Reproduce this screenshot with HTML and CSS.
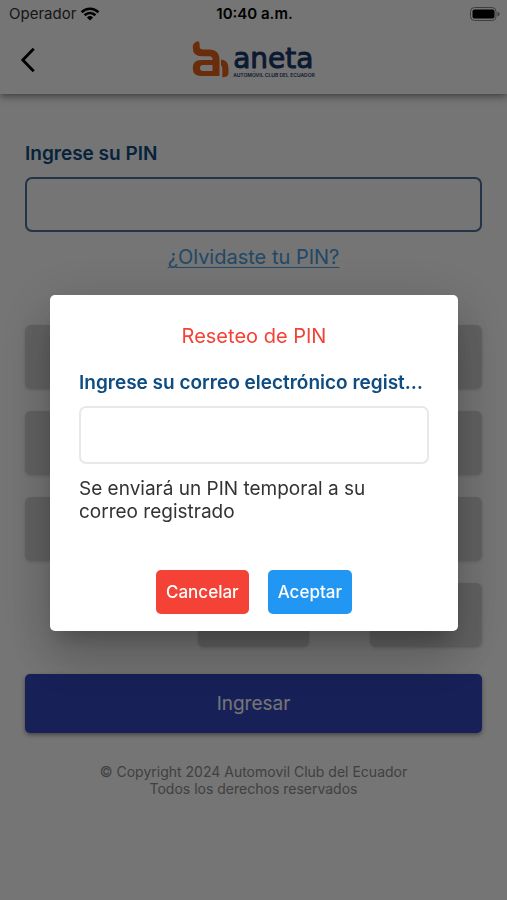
FILE: index.html
```html
<!DOCTYPE html>
<html lang="es">
<head>
  <meta charset="utf-8">
  <meta name="viewport" content="width=device-width, initial-scale=1">
  <title>Aneta</title>
  <link rel="stylesheet" href="styles.css">
</head>
<body>
  <header class="topbar">
    <div class="status">
      <span class="carrier">Operador
        <svg class="wifi" viewBox="0 0 20 14" aria-hidden="true">
          <path d="M1.6 5.2a12 12 0 0 1 16.8 0M4.6 8.2a7.8 7.8 0 0 1 10.8 0"/>
          <path class="dot" d="M10 13.6 6.9 10.5a4.5 4.5 0 0 1 6.2 0z"/>
        </svg>
      </span>
      <span class="clock">10:40 a.m.</span>
      <svg class="battery" viewBox="0 0 30 14" aria-hidden="true">
        <rect class="shell" x="0.5" y="0.5" width="25.5" height="13" rx="4"/>
        <rect x="2.5" y="2.5" width="22" height="9" rx="2"/>
        <path class="cap" d="M27.5 4.5q2.2 1 2.2 2.5t-2.2 2.5z"/>
      </svg>
    </div>
    <nav class="nav">
      <button class="back" type="button" aria-label="Atrás">
        <svg viewBox="0 0 14 24" aria-hidden="true"><path d="M12.3 1.7 2.2 12l10.1 10.3"/></svg>
      </button>
      <div class="brand">
        <svg class="mark" viewBox="0 0 37 37" aria-hidden="true">
          <path d="M3 1.500Q7.600-1.500 7.600 3V5.500Q7.600 8.500 11 8.500H17Q27.500 8.500 27.500 19V35H9Q.8 35 .8 27.500V26.500Q.8 19 9 19H20.500V18Q20.500 15.300 17.500 15.300H10Q.8 15.300 .8 7V5Q.8 3 3 1.500ZM20.500 24H11Q8 24 8 27T11 30H20.500Z" fill-rule="evenodd"/>
          <path d="M29 18.500Q36.500 19 36.500 27V32Q36.500 36.300 30.300 36.300V27Q30.300 25 29 24.500Z"/>
        </svg>
        <div class="wordmark">
          <span class="name">aneta</span>
          <span class="tagline">AUTOMÓVIL CLUB DEL ECUADOR</span>
        </div>
      </div>
    </nav>
  </header>

  <main class="page">
    <label class="label" for="pin">Ingrese su PIN</label>
    <input class="field pin" id="pin" type="password">
    <a class="forgot" href="#reset">¿Olvidaste tu PIN?</a>
    <div class="keypad">
      <button type="button" aria-label="1"></button>
      <button type="button" aria-label="2"></button>
      <button type="button" aria-label="3"></button>
      <button type="button" aria-label="4"></button>
      <button type="button" aria-label="5"></button>
      <button type="button" aria-label="6"></button>
      <button type="button" aria-label="7"></button>
      <button type="button" aria-label="8"></button>
      <button type="button" aria-label="9"></button>
      <button class="zero" type="button" aria-label="0"></button>
      <button type="button" aria-label="Borrar"></button>
    </div>
    <button class="submit" type="button">Ingresar</button>
    <footer class="legal">© Copyright 2024 Automovil Club del Ecuador<br>Todos los derechos reservados</footer>
  </main>

  <div class="scrim">
    <form class="dialog" id="reset" role="dialog" aria-labelledby="reset-title">
      <h2 class="title" id="reset-title">Reseteo de PIN</h2>
      <label class="label" for="email">Ingrese su correo electrónico registrado</label>
      <input class="field" id="email" type="email">
      <p class="hint">Se enviará un PIN temporal a su correo registrado</p>
      <div class="actions">
        <button class="cancel" type="button">Cancelar</button>
        <button class="accept" type="button">Aceptar</button>
      </div>
    </form>
  </div>
</body>
</html>
```

FILE: styles.css
```css
* {
  box-sizing: border-box;
}

body {
  margin: 0;
  min-height: 100vh;
  background: #fefefe;
  color: #000;
  font-family: Inter, "Liberation Sans", sans-serif;
}

button,
input {
  font: inherit;
}

button {
  border: 0;
  padding: 0;
}

svg {
  display: block;
}

.topbar {
  background: #fff;
  box-shadow: 0 2px 8px rgba(0, 0, 0, 0.5);
}

.status {
  display: grid;
  grid-template-columns: 1fr auto 1fr;
  align-items: center;
  height: 27px;
  padding: 0 7px 0 9px;
  font-size: 15px;
}

.carrier {
  display: flex;
  align-items: center;
  gap: 4px;
  color: #333;
}

.wifi {
  width: 20px;
  height: 14px;
  fill: none;
  stroke: #000;
  stroke-width: 2.6;
}

.wifi .dot {
  fill: #000;
  stroke: none;
}

.clock {
  font-weight: 600;
}

.battery {
  justify-self: end;
  width: 30px;
  height: 14px;
}

.battery .shell {
  fill: none;
  stroke: #888;
}

.battery .cap {
  fill: #888;
}

.nav {
  display: grid;
  grid-template-columns: 1fr auto 1fr;
  align-items: center;
  height: 67px;
  padding: 0 20px 2px;
}

.back {
  width: 16px;
  height: 26px;
  background: none;
}

.back svg {
  width: 16px;
  height: 26px;
  fill: none;
  stroke: #000;
  stroke-width: 2.6;
}

.brand {
  display: flex;
  align-items: center;
  gap: 4px;
}

.mark {
  width: 37px;
  height: 37px;
  fill: #e8621a;
}

.wordmark {
  display: flex;
  flex-direction: column;
  color: #1b3a6b;
  padding-top: 5px;
}

.name {
  font-family: "DejaVu Sans", sans-serif;
  font-size: 28px;
  line-height: 26px;
  -webkit-text-stroke: 1px #1b3a6b;
}

.tagline {
  font-size: 5px;
  font-weight: 600;
  line-height: 6px;
}

.page {
  display: flex;
  flex-direction: column;
  padding: 48px 25px 0;
}

.label {
  overflow: hidden;
  color: #0f4c81;
  font-size: 19px;
  font-weight: 600;
  line-height: 24px;
  text-overflow: ellipsis;
  white-space: nowrap;
}

.field {
  width: 100%;
  height: 58px;
  margin: 11px 0 13px;
  padding: 0 14px;
  border: 2px solid #e8e8e8;
  border-radius: 7px;
  background: transparent;
}

.pin {
  height: 55px;
  border-color: #4a7198;
}

.forgot {
  align-self: center;
  color: #4a9ee0;
  font-size: 20px;
  line-height: 24px;
  text-decoration-thickness: 1px;
  text-underline-offset: 3px;
}

.keypad {
  display: grid;
  grid-template-columns: repeat(3, 1fr);
  gap: 22px 61px;
  margin-top: 56px;
}

.keypad button {
  height: 64px;
  border-radius: 6px;
  background: #d6d6d6;
  box-shadow: 0 1px 3px rgba(0, 0, 0, 0.15);
}

.keypad .zero {
  grid-column: 2;
}

.submit {
  height: 59px;
  margin-top: 27px;
  border-radius: 5px;
  background: #3248c0;
  color: #fff;
  font-size: 19px;
  box-shadow: 0 2px 4px rgba(0, 0, 0, 0.4);
}

.legal {
  margin-top: 30px;
  color: #8c8c8c;
  font-size: 14px;
  line-height: 17px;
  text-align: center;
}

.scrim {
  position: fixed;
  inset: 0;
  display: flex;
  align-items: center;
  justify-content: center;
  padding: 26px 49px 0 50px;
  background: rgba(0, 0, 0, 0.54);
}

.dialog {
  display: flex;
  flex-direction: column;
  width: 100%;
  max-width: 560px;
  padding: 30px 29px 17px;
  border-radius: 5px;
  background: #fff;
  box-shadow: 0 14px 19px -8px rgba(0, 0, 0, 0.2), 0 30px 48px 4px rgba(0, 0, 0, 0.14), 0 11px 58px 10px rgba(0, 0, 0, 0.12);
}

.title {
  margin: 0 0 23px;
  color: #f44336;
  font-size: 20px;
  font-weight: 400;
  line-height: 23px;
  text-align: center;
}

.hint {
  margin: 0;
  color: #333;
  font-size: 19px;
  line-height: 23px;
}

.actions {
  display: flex;
  justify-content: center;
  gap: 19px;
  margin-top: 47px;
}

.actions button {
  height: 44px;
  padding: 0 10px;
  border-radius: 5px;
  color: #fff;
  font-size: 17px;
  font-weight: 500;
}

.actions .cancel {
  background: #f44336;
}

.actions .accept {
  background: #2196f3;
}
```
